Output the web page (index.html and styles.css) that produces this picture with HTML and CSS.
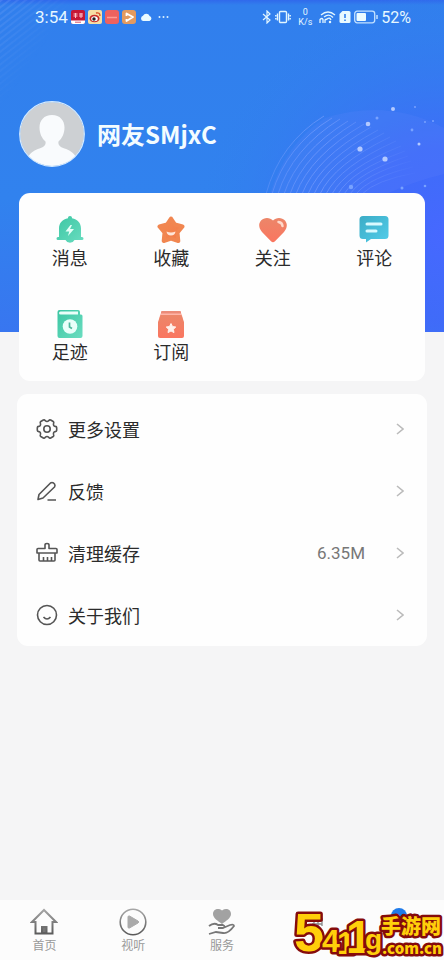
FILE: index.html
```html
<!DOCTYPE html>
<html lang="zh-CN">
<head>
<meta charset="utf-8">
<meta name="viewport" content="width=device-width, initial-scale=1">
<title>我的</title>
<link rel="stylesheet" href="styles.css">
</head>
<body>
<div class="backdrop" aria-hidden="true">
  <svg class="waves" viewBox="0 0 444 332" preserveAspectRatio="xMaxYMin slice">
    <defs>
      <radialGradient id="glow" gradientUnits="userSpaceOnUse" cx="444" cy="235" r="250">
        <stop offset="0" stop-color="#4668ff"/><stop offset=".35" stop-color="#4169fa" stop-opacity=".85"/><stop offset="1" stop-color="#3180ee" stop-opacity="0"/>
      </radialGradient>
      <linearGradient id="fade" x1="0" x2="1"><stop offset="0" stop-color="#fff" stop-opacity=".5"/><stop offset=".4" stop-color="#fff"/><stop offset="1" stop-color="#fff" stop-opacity="0"/></linearGradient>
      <pattern id="rays" width="5" height="5" patternUnits="userSpaceOnUse" patternTransform="rotate(-38)"><path d="M0 1h5" stroke="#79a8f6" stroke-width="1" opacity=".55"/></pattern>
      <linearGradient id="cornerFade" x1="0" y1="0" x2="1" y2="1"><stop offset="0" stop-color="#fff"/><stop offset=".5" stop-color="#fff" stop-opacity="0"/></linearGradient>
      <mask id="cornerMask"><path d="M0 0h75v110H0z" fill="url(#cornerFade)"/></mask>
      <mask id="arcMask"><path d="M255 100h165v95H255z" fill="url(#fade)"/></mask>
    </defs>
    <path d="M0 0h444v332H0z" fill="url(#glow)"/>
    <path d="M270 194Q286 143 325 118Q388 98 444 128V174Q415 181 386 194z" fill="#6c86ff" opacity=".16"/>
    <g mask="url(#arcMask)" fill="none" stroke="#86a6ff" stroke-width="1" opacity=".55">
      <path d="M266 194Q280 143 324 116M272 194Q286 146 332 118M278 194Q292 149 340 119M284 194Q298 152 348 121M290 194Q304 154 356 122M296 194Q310 156 364 124M302 194Q316 158 371 127M308 194Q322 160 378 130M314 194Q328 162 384 133M320 194Q334 164 390 137M326 194Q340 166 396 141M332 194Q346 168 401 146M338 194Q352 170 405 151M344 194Q358 172 408 156M350 194Q364 174 411 161M356 194Q370 177 413 167M362 194Q376 180 415 173"/>
    </g>
    <path d="M0 0h75v110H0z" fill="url(#rays)" mask="url(#cornerMask)"/>
    <g fill="#b4caff"><circle cx="368" cy="124" r="2.3"/><circle cx="360" cy="149" r="2.6"/><circle cx="385" cy="159" r="2.6"/><circle cx="393" cy="109" r="2"/><circle cx="419" cy="144" r="1.5"/></g>
    <g fill="#78a2ff"><circle cx="377" cy="118" r="1.5"/><circle cx="412" cy="130" r="1.4"/><circle cx="425" cy="122" r="1"/><circle cx="433" cy="121" r="1"/><circle cx="351" cy="187" r="2.2"/><circle cx="402" cy="188" r="1.5"/><circle cx="425" cy="186" r="1.3"/><circle cx="415" cy="107" r="1"/></g>
  </svg>
</div>

<div class="screen">
  <header>
    <div class="status">
      <div class="status-side">
        <span class="clock">3:54</span>
        <svg width="14" height="14" viewBox="0 0 14 14"><rect width="14" height="14" rx="2" fill="#c51736"/><path d="M0 10.5h14V12a2 2 0 0 1-2 2H2a2 2 0 0 1-2-2z" fill="#fff"/><path d="M2.500 4h4M2.500 6h4M4.500 3v5M8 4h4M8 6h4M10 3v5" stroke="#ffc0c8" stroke-width="1"/><path d="M4 12.200h6" stroke="#d65068"/></svg>
        <svg width="14" height="14" viewBox="0 0 14 14"><rect width="14" height="14" rx="2" fill="#f6dfa5"/><ellipse cx="6.500" cy="8.500" rx="5" ry="3.800" fill="#c82b28"/><ellipse cx="6.500" cy="8.800" rx="3.300" ry="2.500" fill="#fff"/><circle cx="6" cy="9" r="1.700" fill="#222"/><path d="M8 3q4-1 4 3" fill="none" stroke="#d94b27" stroke-width="1.300"/></svg>
        <svg width="14" height="14" viewBox="0 0 14 14"><rect width="14" height="14" rx="3" fill="#ee625f"/><path d="M2 7.500h10" stroke="#ff9c94" stroke-width="1.500"/></svg>
        <svg width="14" height="14" viewBox="0 0 14 14"><rect width="14" height="14" rx="3" fill="#e39a60"/><path d="M4.500 6V3.500L11 7l-6.500 4V9" fill="none" stroke="#fff" stroke-width="1.800" stroke-linejoin="round"/></svg>
        <svg width="14" height="14" viewBox="0 0 14 14"><path d="M4 11a2.700 2.700 0 0 1 0-5.200A3.600 3.600 0 0 1 10.600 6 2.600 2.600 0 0 1 10.500 11z" fill="#e9faff"/></svg>
        <svg width="14" height="14" viewBox="0 0 14 14" fill="#d9f1ff"><circle cx="3.500" cy="7" r="1"/><circle cx="7.500" cy="7" r="1"/><circle cx="11.500" cy="7" r="1"/></svg>
      </div>
      <div class="status-side">
        <svg width="10" height="14" viewBox="0 0 10 14" fill="none" stroke="#e2f6ff" stroke-width="1.200"><path d="M1 4l7 6-3 3V1l3 3-7 6"/></svg>
        <svg width="16" height="14" viewBox="0 0 16 14" fill="none" stroke="#e2f6ff" stroke-width="1.400"><rect x="4.500" y="1.500" width="7" height="11" rx="1"/><path d="M2.500 3.500v7M13.500 3.500v7M.8 5v1.500M.8 8v1.500M15.200 5v1.500M15.200 8v1.500"/></svg>
        <span class="speed"><span>0</span><span>K/s</span></span>
        <svg width="17" height="14" viewBox="0 0 17 14" fill="none" stroke="#e2f6ff" stroke-width="1.300"><path d="M2 5q7-6 14 0M5 7q5-4 9 .5M8 9q3-2 4 1"/><circle cx="11" cy="12" r=".6"/><path d="M1 13V9.500q2-2 3 0V13M6 13v-3q1.500-1.500 2 0"/></svg>
        <svg width="12" height="14" viewBox="0 0 12 14"><path d="M3.500 1H10a1.500 1.500 0 0 1 1.500 1.500v9A1.500 1.500 0 0 1 10 13H2A1.500 1.500 0 0 1 .5 11.500V4z" fill="#e9faff"/><path d="M6 4v4M6 9.500v1.500" stroke="#3180ed" stroke-width="1.600"/></svg>
        <svg width="24" height="14" viewBox="0 0 24 14"><rect x=".7" y="1.200" width="20" height="11.600" rx="2.500" fill="none" stroke="#c4e2ff" stroke-width="1.300"/><rect x="2.500" y="3" width="9.500" height="8" rx="1" fill="#ecfbff"/><path d="M23 5v4" stroke="#c4e2ff" stroke-width="1.500"/></svg>
        <span class="percent">52%</span>
      </div>
    </div>
    <div class="profile">
      <svg class="avatar" viewBox="0 0 66 66" role="img" aria-label="头像"><defs><clipPath id="face"><circle cx="33" cy="33" r="32"/></clipPath></defs><circle cx="33" cy="33" r="32" fill="#cdd0d3"/><path clip-path="url(#face)" d="M33 14c-8 0-12.500 5.500-12.500 12.500 0 6 2.500 11 6 14 .7 4-2 5.500-6 7C16 49 12 51 9 56v10h48V56c-3-5-7-7-11.500-8.500-4-1.500-6.700-3-6-7 3.500-3 6-8 6-14C45.500 19.500 41 14 33 14z" fill="#f9fbfd"/><circle cx="33" cy="33" r="32.300" fill="none" stroke="#d5ebff" stroke-width="1.200"/></svg>
      <h1>网友SMjxC</h1>
    </div>
  </header>

  <main>
    <nav class="card shortcuts" aria-label="快捷入口">
      <a href="#messages"><svg viewBox="0 0 28 28"><defs><linearGradient id="green" x1="0" y1="0" x2="1" y2="1"><stop stop-color="#3cc6a3"/><stop offset="1" stop-color="#6addc0"/></linearGradient></defs><path d="M14 0a2 2 0 0 1 2 2.200C21.500 3 25 7 25 12.500V21h1a1.500 1.500 0 0 1 0 3h-7.500a5 5 0 0 1-9 0H2a1.500 1.500 0 0 1 0-3h1v-8.500C3 7 6.500 3 12 2.200A2 2 0 0 1 14 0z" fill="url(#green)"/><path d="M14.500 9l-5 6.500h3.700L12 20l6-7h-4l2-4z" fill="#e7fff8"/></svg><span>消息</span></a>
      <a href="#favorites"><svg viewBox="0 0 28 28"><defs><linearGradient id="orange" x1="0" y1="0" x2="1" y2="1"><stop stop-color="#f18b53"/><stop offset="1" stop-color="#f47a47"/></linearGradient></defs><path d="M14 2.500l4 6 7.500 2-5 6.100.8 8.400-7.300-2.300L6.700 25l.8-8.400-5-6.100 7.500-2z" fill="url(#orange)" stroke="#f18650" stroke-width="4" stroke-linejoin="round"/><path d="M9.500 15.500q4.500 2 9 0-.5 4-4.500 4t-4.500-4z" fill="#ffe6d9"/></svg><span>收藏</span></a>
      <a href="#following"><svg viewBox="0 0 28 28"><defs><linearGradient id="coral" x1="0" y1="0" x2="0" y2="1"><stop stop-color="#ec8669"/><stop offset="1" stop-color="#fa7660"/></linearGradient></defs><path d="M14 4.500C11 1 5 1 2 4.500c-3 3.700-2 8 1 11.500l9 9.300q2 1.700 4 0L25 16c3-3.500 4-7.800 1-11.500C23 1 17 1 14 4.500z" fill="url(#coral)"/><path d="M19.500 6q3.800.5 4 4" fill="none" stroke="#ffd8ca" stroke-width="2.500" stroke-linecap="round"/></svg><span>关注</span></a>
      <a href="#comments"><svg class="wide" viewBox="0 0 30 28"><defs><linearGradient id="cyan" x1="0" y1="0" x2="1" y2="1"><stop stop-color="#3cacc6"/><stop offset="1" stop-color="#52cdea"/></linearGradient></defs><path d="M4 0h22a3.500 3.500 0 0 1 3.500 3.500v16A3.500 3.500 0 0 1 26 23H12l-5 3.500V23H4A3.500 3.500 0 0 1 .5 19.500v-16A3.500 3.500 0 0 1 4 0z" fill="url(#cyan)"/><path d="M8 8h14M8 15h9" stroke="#d9faff" stroke-width="3" stroke-linecap="round"/></svg><span>评论</span></a>
      <a href="#history"><svg viewBox="0 0 28 28"><path d="M3.500 0H22a2 2 0 0 1 2 2v2.500h1A1.500 1.500 0 0 1 26.500 6v20a2 2 0 0 1-2 2h-21a2 2 0 0 1-2-2V2a2 2 0 0 1 2-2z" fill="url(#green)"/><path d="M4.500 1.500H22v3H4.500a1.500 1.500 0 0 1 0-3z" fill="#eafff9"/><circle cx="14" cy="16.500" r="7.300" fill="#e8fffa"/><path d="M13.500 12.500v4.500l2.500 1.500" fill="none" stroke="#4eb79c" stroke-width="1.700"/></svg><span>足迹</span></a>
      <a href="#subscriptions"><svg viewBox="0 0 28 28"><path d="M5 1h18q1 0 1 1v4H4V2q0-1 1-1z" fill="#ec8b78"/><path d="M3.500 3.500h21L26 9H2z" fill="#ffb5a8"/><path d="M3.500 5h21L27 12v14a2 2 0 0 1-2 2H3a2 2 0 0 1-2-2V12z" fill="url(#coral)"/><path d="M14 13.500l1.500 3 3.300.5-2.400 2.300.6 3.300-3-1.600-3 1.600.6-3.300-2.400-2.300 3.300-.5z" fill="#fff0eb" stroke="#fff0eb"/></svg><span>订阅</span></a>
    </nav>

    <nav class="card settings" aria-label="设置">
      <a href="#settings"><svg class="lead" viewBox="0 0 22 22"><path d="M7.300 2Q8.500 1.500 9.200 2.700q1.800 1.600 3.600 0 .7-1.200 1.900-.7l2.500 1.500q1 .7.400 1.900-.7 2.300 1.700 3 1.400.1 1.400 1.300v2.600q0 1.200-1.400 1.300-2.400.7-1.700 3 .6 1.200-.4 1.900L14.700 20q-1.200.5-1.900-.7-1.800-1.600-3.600 0-.7 1.200-1.900.7l-2.500-1.500q-1-.7-.4-1.900.7-2.300-1.700-3-1.400-.1-1.400-1.300V9.700q0-1.200 1.400-1.300 2.400-.7 1.700-3-.6-1.200.4-1.900z"/><circle cx="11" cy="11" r="3.200"/></svg><span>更多设置</span><svg class="arrow" viewBox="0 0 8 12"><path d="M1 1l6 5-6 5"/></svg></a>
      <a href="#feedback"><svg class="lead" viewBox="0 0 22 22"><path d="M2 19.500l1-5L14.500 3q1.500-1 3 0l1 1q1 1.500 0 3L7 18zM11.500 20H20"/></svg><span>反馈</span><svg class="arrow" viewBox="0 0 8 12"><path d="M1 1l6 5-6 5"/></svg></a>
      <button type="button"><svg class="lead" viewBox="0 0 22 22"><path d="M1 7.500q0-1 1-1h7V3q0-1.500 2-1.500T13 3v3.500h7q1 0 1 1V11H1zM3 11v7q0 1 1 1h14q1 0 1-1v-7M7.500 15v4M11.500 15v4M15.500 15v4"/></svg><span>清理缓存</span><span class="value">6.35M</span><svg class="arrow" viewBox="0 0 8 12"><path d="M1 1l6 5-6 5"/></svg></button>
      <a href="#about"><svg class="lead" viewBox="0 0 22 22"><circle cx="11" cy="11" r="9.500"/><path d="M7.500 13q3.500 4 7 0"/></svg><span>关于我们</span><svg class="arrow" viewBox="0 0 8 12"><path d="M1 1l6 5-6 5"/></svg></a>
    </nav>
  </main>

  <nav class="tabs" aria-label="主导航">
    <a href="#home"><svg viewBox="0 0 28 28" fill="none" stroke="url(#gray)" stroke-width="2"><defs><linearGradient id="gray" gradientUnits="userSpaceOnUse" x1="0" y1="0" x2="0" y2="28"><stop stop-color="#aaa"/><stop offset="1" stop-color="#555"/></linearGradient></defs><path d="M5.500 14H2L14 2l12 12h-3.500v11.500h-17z"/><path d="M12 25v-6h4.500v6z" fill="#777"/></svg><span>首页</span></a>
    <a href="#video"><svg viewBox="0 0 28 28"><circle cx="14" cy="14" r="12.800" fill="none" stroke="url(#gray)" stroke-width="1.600"/><path d="M9 9q0-1.500 1.500-1l8.500 5q1.500 1 0 2l-8.500 5Q9 20.500 9 19z" fill="#aaa" stroke="#aaa"/></svg><span>视听</span></a>
    <a href="#service"><svg viewBox="0 0 28 28"><path d="M14 2.500C10-.5 5 1.500 5 6c0 4 5 7 9 10 4-3 9-6 9-10 0-4.500-5-6.500-9-3.500z" fill="#a2a2a2"/><path d="M1 18q5-4 9-1h5q3 1 0 3h-5M15 20l7-3q4-1 4 1-6 8-11 7l-7-1-7 2" fill="none" stroke="#777" stroke-width="1.800"/></svg><span>服务</span></a>
    <a href="#news" aria-label="资讯"><svg viewBox="0 0 28 28"><path d="M14 12h12M15 16h10M17 10v8M21 10v8M25 10v8" stroke="#888" stroke-width="1.300"/></svg></a>
    <a href="#mine" aria-label="我的"><svg viewBox="0 0 28 28"><circle cx="13" cy="8" r="8" fill="#1f7bea"/></svg></a>
    <svg class="stamp" viewBox="0 0 152 56">
      <g class="digits">
        <text x="2" y="47" font-size="54">5</text>
        <text x="30" y="48" font-size="32">4</text>
        <text x="45" y="50" font-size="32">1</text>
        <text x="54" y="49" font-size="46">1</text>
        <text x="73" y="45" font-size="28">g</text>
      </g>
      <text x="89" y="30" font-size="20">手游网</text>
      <text x="90" y="50" font-size="15">.com.cn</text>
    </svg>
  </nav>
</div>
</body>
</html>
```

FILE: styles.css
```css
* { box-sizing: border-box; }
body {
  margin: 0;
  background: #f5f5f6;
  color: #2b2b2b;
  font-family: Roboto, "Noto Sans CJK SC", sans-serif;
}
a { color: inherit; text-decoration: none; }
svg { display: block; flex: none; }

.backdrop {
  position: absolute;
  inset: 0 0 auto;
  height: 332px;
  overflow: hidden;
  background: linear-gradient(#3069ec 0, #317fed 5px, #3182ee 60%, #3876f0 100%);
}
.waves { width: 100%; height: 100%; }

.screen {
  position: relative;
  display: flex;
  flex-direction: column;
  min-height: 100vh;
}

.status {
  display: flex;
  justify-content: space-between;
  align-items: center;
  height: 34px;
  padding: 0 33px 0 35px;
  color: #e6f7ff;
}
.status-side { display: flex; align-items: center; gap: 3px; }
.clock { font-size: 17px; }
.percent { font-size: 16px; }
.speed {
  display: flex;
  flex-direction: column;
  align-items: center;
  padding: 0 4px;
  font-size: 9px;
  line-height: 10px;
}

.profile {
  display: flex;
  align-items: center;
  gap: 12px;
  padding: 67px 19px 26px;
}
.avatar { width: 66px; height: 66px; }
h1 {
  margin: 0;
  color: #f3fcff;
  font-family: "Noto Sans CJK SC", sans-serif;
  font-size: 24px;
  font-weight: 700;
  line-height: 30px;
}

.card { background: #fefefe; border-radius: 11px; }

.shortcuts {
  display: grid;
  grid-template-columns: repeat(4, 1fr);
  row-gap: 38px;
  margin: 0 19px 13px;
  padding: 23px 0 15px;
}
.shortcuts a {
  display: flex;
  flex-direction: column;
  align-items: center;
  gap: 2px;
  font-size: 18px;
  line-height: 26px;
}
.shortcuts svg { width: 28px; height: 28px; }
.shortcuts .wide { width: 30px; }

.settings { margin: 0 17px; padding-top: 4px; }
.settings a,
.settings button {
  display: flex;
  align-items: center;
  width: 100%;
  height: 62px;
  padding: 0 23px 0 19px;
  border: 0;
  background: none;
  color: inherit;
  font: inherit;
  font-size: 18px;
}
.lead {
  width: 22px;
  height: 22px;
  margin-right: 10px;
  fill: none;
  stroke: #555;
  stroke-width: 1.6;
  stroke-linejoin: round;
}
.arrow {
  width: 8px;
  height: 12px;
  margin-left: auto;
  fill: none;
  stroke: #bbb;
  stroke-width: 1.6;
}
.value { margin-left: auto; color: #777; font-size: 17px; }
.value + .arrow { margin-left: 31px; }

.tabs {
  position: relative;
  display: grid;
  grid-template-columns: repeat(5, 1fr);
  height: 60px;
  margin-top: auto;
  padding-top: 8px;
  background: #fcfcfc;
}
.tabs a {
  display: flex;
  flex-direction: column;
  align-items: center;
  gap: 1px;
  color: #999;
  font-size: 12px;
  line-height: 18px;
}
.tabs a svg { width: 28px; height: 28px; }

.stamp {
  position: absolute;
  right: 0;
  bottom: 0;
  width: 152px;
  height: 56px;
  fill: #ffcf0a;
  stroke: #850b0b;
  stroke-width: 5px;
  stroke-linejoin: round;
  paint-order: stroke fill;
  font-family: "Noto Sans CJK SC", sans-serif;
  font-weight: 900;
}
.digits { font-family: "Liberation Sans", sans-serif; }
```
